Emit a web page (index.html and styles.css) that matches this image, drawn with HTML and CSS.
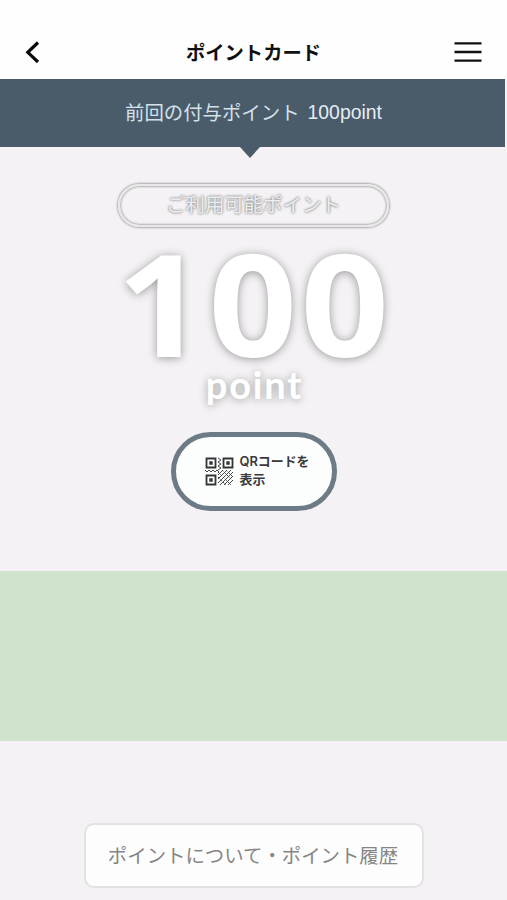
FILE: index.html
```html
<!DOCTYPE html>
<html lang="ja">
<head>
<meta charset="utf-8">
<meta name="viewport" content="width=device-width, initial-scale=1">
<title>ポイントカード</title>
<link rel="stylesheet" href="styles.css">
</head>
<body>
<header class="header">
  <svg class="back" viewBox="0 0 16 24" fill="none" stroke="#090909" stroke-width="3.2"><path d="M13 1.5 2.8 11.3 13 21"/></svg>
  <h1 class="title">ポイントカード</h1>
  <svg class="menu" viewBox="0 0 28 22" stroke="#111" stroke-width="2.3"><path d="M.5 1.4h27M.5 10h27M.5 18.6h27"/></svg>
</header>
<div class="last"><span class="last-label">前回の付与ポイント</span><span class="last-value">100point</span></div>
<main class="card">
  <div class="available"><span>ご利用可能ポイント</span></div>
  <div class="amount">100</div>
  <div class="unit">point</div>
  <button class="qr-button">
    <svg class="qr" viewBox="0 0 29 29" fill="none" stroke="#333437" stroke-width="1.8">
      <path d="M1.5 1.5h9v9h-9zM18.5 1.5h9v9h-9zM1.5 18.5h9v9h-9z"/>
      <path fill="#333437" stroke="none" d="M4.3 4.3h3.4v3.4H4.3zM21.3 4.3h3.4v3.4h-3.4zM4.3 21.3h3.4v3.4H4.3z"/>
      <path stroke-width=".9" d="M13 1l3 2-3 2 3 2-3 2 3 2-3 2M0 13l2 2 2-2 2 2 2-2 2 2 2-2 2 2M13 18l5-5M13 22l9-9M13 26l13-13M15 28l13-13M19 28l9-9M23 28l5-5"/>
      <path stroke-width=".9" stroke-dasharray="2 1.5" d="M17 13l11 11M13 15l13 13M21 13l7 7M13 20l8 8"/>
    </svg>
    <span class="qr-label">QRコードを<br>表示</span>
  </button>
</main>
<div class="banner"></div>
<footer class="footer"><button class="history">ポイントについて・ポイント履歴</button></footer>
</body>
</html>
```

FILE: styles.css
```css
* { box-sizing: border-box; }
body {
  margin: 0;
  height: 900px;
  overflow: hidden;
  background: #f4f2f4;
  font-family: "Liberation Sans", "Noto Sans CJK JP", sans-serif;
}
button { font-family: inherit; }
.header {
  height: 79px;
  padding: 26px 25px 0;
  background: #fefefe;
  display: grid;
  grid-template-columns: 28px 1fr 28px;
  align-items: center;
}
.back { width: 16px; height: 24px; }
.menu { width: 28px; height: 22px; }
.title {
  margin: 0;
  padding-top: 2px;
  font-size: 19.3px;
  line-height: 28px;
  font-weight: 700;
  text-align: center;
  color: #101010;
}
.last {
  position: relative;
  height: 68px;
  margin-right: 2px;
  padding: 0 0 3px 2px;
  display: flex;
  justify-content: center;
  align-items: center;
  gap: 8px;
  background: #4a5b6a;
  color: #d3e1ea;
  font-size: 19.4px;
}
.last-value { color: #e4edf3; padding-top: 2px; }
.last::after {
  content: "";
  position: absolute;
  left: 240px;
  top: 100%;
  border: solid transparent;
  border-width: 11px 10.5px 0;
  border-top-color: #4a5b6a;
}
.card {
  height: 424px;
  padding-top: 37px;
  display: flex;
  flex-direction: column;
  align-items: center;
}
.available {
  width: 271px;
  height: 43px;
  flex: none;
  border: 2px solid #e9e7e9;
  border-radius: 22px;
  box-shadow: 0 0 2px 1px #aaa, inset 0 0 2px 1px #b0b0b0;
  display: flex;
  justify-content: center;
  align-items: center;
  color: #eeedee;
  font-size: 19.4px;
  line-height: 28px;
  text-shadow: 0 0 3px #888, 0 0 2px #999;
}
.available span { padding-bottom: 2px; }
.amount {
  height: 140px;
  padding-left: 2px;
  font: 700 141px/151px "Open Sans", sans-serif;
  letter-spacing: 3px;
  transform: scaleX(1.1);
  color: #fff;
  text-shadow: 0 1px 9px rgba(0, 0, 0, .38);
}
.unit {
  height: 65px;
  font: 700 38px/34px Lato, sans-serif;
  letter-spacing: 1.8px;
  padding-left: 2px;
  color: #fff;
  text-shadow: 0 1px 8px rgba(0, 0, 0, .36);
}
.qr-button {
  flex: none;
  width: 166px;
  height: 79px;
  padding: 0 20px 1px 29px;
  display: flex;
  align-items: center;
  gap: 6px;
  border: 5px solid #6d7b87;
  border-radius: 40px;
  background: #fcfefe;
}
.qr { width: 29px; height: 29px; flex: none; }
.qr-label {
  font-family: "Inter", "Noto Sans CJK JP", sans-serif;
  font-size: 12.9px;
  line-height: 18px;
  font-weight: 600;
  text-align: left;
  white-space: nowrap;
  color: #3a3a3c;
}
.banner { height: 170px; background: #d0e3cc; }
.footer { padding-top: 82px; display: flex; justify-content: center; }
.history {
  width: 340px;
  height: 65px;
  padding: 0 1px 3px 0;
  border: 2px solid #e3e1e3;
  border-radius: 10px;
  background: #fdfdfd;
  color: #858585;
  font-size: 19.4px;
  white-space: nowrap;
}
```
